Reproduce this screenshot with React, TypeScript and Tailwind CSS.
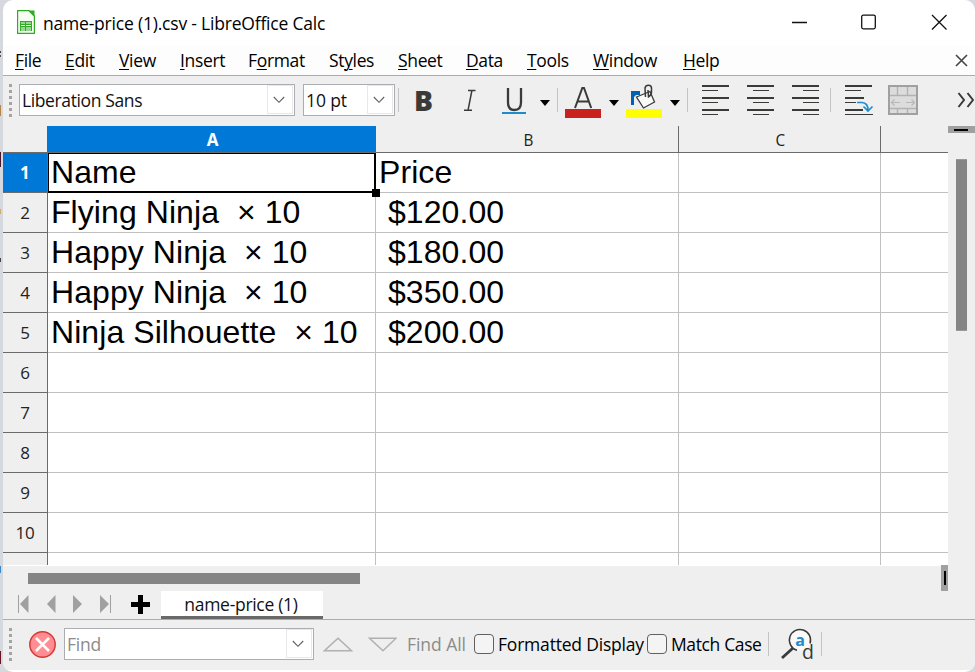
import React from "react";

const menus = [
  { pre: "", key: "F", post: "ile", w: "w-[50px]" },
  { pre: "", key: "E", post: "dit", w: "w-[54px]" },
  { pre: "", key: "V", post: "iew", w: "w-[61px]" },
  { pre: "", key: "I", post: "nsert", w: "w-[68px]" },
  { pre: "F", key: "o", post: "rmat", w: "w-[81px]" },
  { pre: "St", key: "y", post: "les", w: "w-[69px]" },
  { pre: "", key: "S", post: "heet", w: "w-[68px]" },
  { pre: "", key: "D", post: "ata", w: "w-[61px]" },
  { pre: "", key: "T", post: "ools", w: "w-[66px]" },
  { pre: "", key: "W", post: "indow", w: "w-[90px]" },
  { pre: "", key: "H", post: "elp", w: "w-[60px]" },
];

const rows = [
  ["Name", "Price"],
  ["Flying Ninja  × 10", " $120.00"],
  ["Happy Ninja  × 10", " $180.00"],
  ["Happy Ninja  × 10", " $350.00"],
  ["Ninja Silhouette  × 10", " $200.00"],
  ["", ""],
  ["", ""],
  ["", ""],
  ["", ""],
  ["", ""],
];

function Grip() {
  return (
    <div className="flex w-[3px] flex-col gap-[3px]">
      {[0, 1, 2, 3, 4, 5].map((i) => (
        <div key={i} className="size-[3px] bg-[#a3a3a3]" />
      ))}
    </div>
  );
}

function Combo({ text, cls, txt }: { text: string; cls: string; txt: string }) {
  return (
    <div className={`flex h-8 shrink-0 items-stretch border border-[#abadb3] bg-white ${cls}`}>
      <div className={`grow whitespace-pre pl-[2px] text-[17.5px] leading-[31px] ${txt}`}>{text}</div>
      <div className="mr-px mb-px flex w-[26px] items-center justify-center border border-[#e8e8e8] pr-0.5">
        <svg width="12" height="8" viewBox="0 0 12 8" fill="none" stroke="#5f5f5f" strokeWidth="1.1">
          <path d="M.8 1 6 6.3 11.2 1" />
        </svg>
      </div>
    </div>
  );
}

function Sep({ cls }: { cls: string }) {
  return <div className={`h-6 w-px shrink-0 bg-[#c3c3c3] ${cls}`} />;
}

function Arrow({ cls }: { cls: string }) {
  return (
    <svg className={`mt-1.5 shrink-0 ${cls}`} width="10" height="6" viewBox="0 0 10 6">
      <path d="M0 0H10L5 6Z" fill="#000" />
    </svg>
  );
}

function Align({ x, cls }: { x: number; cls: string }) {
  return (
    <svg className={`shrink-0 ${cls}`} width="27" height="30" viewBox="0 0 27 30" fill="#3a3a38">
      {[0, 12, 24].map((y) => (
        <g key={y}>
          <rect x="0" y={y} width="27" height="2" />
          <rect x={x} y={y + 5} width="16" height="1" />
        </g>
      ))}
    </svg>
  );
}

function FontTools() {
  return (
    <div className="flex h-[50px] items-center bg-[#efefef] pb-0.5 pl-[6px]">
      <Grip />
      <Combo text="Liberation Sans" cls="ml-[7px] w-[276px]" txt="text-[#111] tracking-[-0.38px]" />
      <Combo text="10 pt" cls="ml-2 w-[92px]" txt="text-[#111] tracking-[-0.1px]" />
      <Sep cls="ml-[3px]" />
      <svg className="ml-[16px] shrink-0" width="18" height="44" viewBox="0 0 18 44">
        <text x="-1" y="33" fontFamily="Open Sans" fontWeight="800" fontSize="29" textLength="19" lengthAdjust="spacingAndGlyphs" fill="#3a3a38">B</text>
      </svg>
      <svg className="ml-[31px] shrink-0" width="12" height="32" viewBox="0 0 12 32">
        <path d="M4 6.5H11.5M0 26.3H8M7.9 6.5 4 26.3" fill="none" stroke="#3a3a38" strokeWidth="1.5" />
      </svg>
      <svg className="ml-[26px] shrink-0" width="24" height="32" viewBox="0 0 24 32">
        <path d="M6 4V18.5Q6 26 12.5 26T19 18.5V4" fill="none" stroke="#3a3a38" strokeWidth="2.3" />
        <rect y="28" width="24" height="2" fill="#1e8bcd" />
      </svg>
      <Arrow cls="ml-[14px]" />
      <Sep cls="ml-[7px]" />
      <svg className="ml-[7px] shrink-0" width="36" height="36" viewBox="0 0 36 36">
        <path d="M10 26 17.3 6H19L26.2 26M12.4 19.5H23.8" fill="none" stroke="#3a3a38" strokeWidth="2" />
        <rect y="27" width="36" height="9" fill="#c9211e" />
      </svg>
      <Arrow cls="ml-[8px]" />
      <svg className="ml-[7px] shrink-0" width="36" height="36" viewBox="0 0 36 36">
        <path d="M5 23V9H14V13H10L8 15V23Z" fill="#0063b1" />
        <path d="M10.5 15 24 9.5 28.5 20 17.5 26Z" fill="#fafafa" stroke="#3a3a38" strokeWidth="1.3" />
        <path d="M19.5 15 19 6Q19.5 3.2 22.5 3.2T25.5 6V10Q25.5 13 22.5 15L22 8" fill="none" stroke="#3a3a38" strokeWidth="1.5" />
        <rect y="27" width="36" height="9" fill="#ff0" />
      </svg>
      <Arrow cls="ml-[8px]" />
      <Sep cls="ml-[7px]" />
      <Align x={0} cls="ml-[14px]" />
      <Align x={6} cls="ml-[18px]" />
      <Align x={11} cls="ml-[18px]" />
      <Sep cls="ml-[11px]" />
      <svg className="ml-[14px] shrink-0" width="29" height="30" viewBox="0 0 29 30">
        <g fill="#3a3a38">
          <rect width="27" height="2" /><rect y="5" width="16" height="1" />
          <rect y="12" width="19" height="2" /><rect y="17" width="11" height="1" />
          <rect y="24" width="18" height="2" /><rect y="29" width="28" height="1" />
        </g>
        <path d="M12 17.5H17Q23 18 23 25M18.5 21.5 23 26 27.5 21.5" fill="none" stroke="#1e8bcd" strokeWidth="1.7" />
      </svg>
      <svg className="ml-[14px] shrink-0" width="30" height="30" viewBox="0 0 30 30" fill="none">
        <rect x="1" y="1" width="28" height="28" fill="#dcdcdc" stroke="#a0a0a0" strokeWidth="2" />
        <path d="M2 10.5H28M2 23.5H28M9.5 2V10M19.5 2V10M9.5 24V28M19.5 24V28" stroke="#b2b2b2" strokeWidth="1.4" />
        <path d="M3.5 17.5H12M6.5 14.5 3.5 17.5 6.5 20.5M18 17.5H26.5M23.5 14.5 26.5 17.5 23.5 20.5" stroke="#b8b8b8" strokeWidth="1.2" />
      </svg>
      <svg className="ml-[38px] shrink-0" width="18" height="16" viewBox="0 0 18 16" fill="none" stroke="#3a3a38" strokeWidth="2">
        <path d="M2.5 1 8 8 2.5 15M11.5 1 17 8 11.5 15" />
      </svg>
    </div>
  );
}

function Sheet() {
  return (
    <div className="flex h-[440px] bg-[#efefef]">
      <div className="w-[945px] overflow-hidden bg-white">
        <div className="flex h-[27px] border-b border-[#6b6b6b] bg-[#efefef] text-[17px] leading-[27px] text-[#222]">
          <div className="w-[44px]" />
          <div className="w-[329px] bg-[#0078d7] pl-0.5 text-center font-bold text-white">A</div>
          <div className="w-[303px] border-r border-[#6b6b6b] pl-0.5 text-center"><span className="inline-block scale-x-90">B</span></div>
          <div className="w-[202px] border-r border-[#6b6b6b] pl-0.5 text-center"><span className="inline-block scale-x-90">C</span></div>
        </div>
        {rows.map((r, i) => (
          <div key={i} className="flex h-10 font-['Liberation_Sans',sans-serif] text-[32px] leading-[38px] tracking-[0.07px] text-black">
            <div
              className={
                i === 0
                  ? "w-[45px] border-r border-b border-[#6b6b6b] bg-[#0078d7] text-center font-['Open_Sans',sans-serif] text-[17px] font-bold leading-[40px] text-white"
                  : "w-[45px] border-r border-b border-[#6b6b6b] bg-[#efefef] text-center font-['Open_Sans',sans-serif] text-[17px] leading-[39px] tracking-[-0.3px] text-[#222]"
              }
            >
              {i + 1}
            </div>
            {i === 0 ? (
              <div className="relative w-[328px] border-t border-r-2 border-b-2 border-l border-black pl-[2px] leading-[37px]">
                {r[0]}
                <div className="absolute -right-[6px] -bottom-[6px] size-2 bg-black" />
              </div>
            ) : (
              <div className="w-[328px] whitespace-pre border-r border-b border-[#c0c0c0] pl-[3px]">{r[0]}</div>
            )}
            <div className="w-[303px] whitespace-pre border-r border-b border-[#c0c0c0] pl-[3px]">{r[1]}</div>
            <div className="w-[202px] border-r border-b border-[#c0c0c0]" />
            <div className="grow border-b border-[#c0c0c0]" />
          </div>
        ))}
        <div className="flex h-[12px]">
          <div className="w-[45px] border-r border-[#6b6b6b] bg-[#efefef]" />
          <div className="w-[328px] border-r border-[#c0c0c0]" />
          <div className="w-[303px] border-r border-[#c0c0c0]" />
          <div className="w-[202px] border-r border-[#c0c0c0]" />
        </div>
      </div>
      <div className="w-[27px]">
        <div className="flex h-[7px] items-center bg-[#a0a0a0] pl-[6px]">
          <div className="h-[2px] w-[14px] bg-black" />
        </div>
        <div className="mt-[26px] ml-2 h-[172px] w-[11px] border-y border-[#999] bg-[#858585]" />
      </div>
    </div>
  );
}

function SheetTabs() {
  return (
    <div className="h-[54px] border-b border-[#ababab] bg-[#efefef]">
      <div className="flex h-[25px]">
        <div className="mt-[7px] ml-[25px] h-[11px] w-[332px] bg-[#858585]" />
        <div className="-mt-px ml-[581px] flex h-[26px] w-[7px] shrink-0 items-center justify-center bg-[#a0a0a0] pl-px">
          <div className="h-[14px] w-[2px] bg-black" />
        </div>
      </div>
      <div className="flex h-[28px]">
        <svg className="mt-[4px] ml-[15px]" width="94" height="18" viewBox="0 0 94 18">
          <path d="M10.5 0V18L2 9ZM37.5 0V18L29 9ZM55 0V18L64 9ZM82 0V18L91 9Z" fill="#a0a0a0" />
          <path d="M.5 0V18M92.5 0V18" stroke="#a0a0a0" />
        </svg>
        <svg className="mt-[4px] ml-[19px]" width="19" height="19" viewBox="0 0 19 19">
          <path d="M7 0H12V7H19V12H12V19H7V12H0V7H7Z" fill="#000" />
        </svg>
        <div className="ml-[11px] h-[28px] w-[162px] border-b-[3px] border-[#696969] bg-white pr-0.5 text-center text-[17.5px] leading-[27px] tracking-[-0.3px] text-[#111]">
          name-price (1)
        </div>
      </div>
    </div>
  );
}

function FindBar() {
  return (
    <div className="flex h-[50px] items-center bg-[#efefef] pb-0.5 pl-[6px] text-[17.5px] whitespace-nowrap text-black">
      <Grip />
      <svg className="ml-[17px]" width="27" height="27" viewBox="0 0 27 27">
        <circle cx="13.5" cy="13.5" r="12.7" fill="#ff8d92" stroke="#d53a36" strokeWidth="1.5" />
        <path d="M7 7 20 20M20 7 7 20" stroke="#fff" strokeWidth="2.6" />
      </svg>
      <Combo text="Find" cls="ml-2 w-[250px]" txt="text-[#8b8b8b] tracking-[-0.2px]" />
      <svg className="ml-[9px] shrink-0" width="74" height="15" viewBox="0 0 74 15" fill="none" stroke="#b0b0b0" strokeWidth="1.5">
        <path d="M1.5 13.7H28.5L15 1.2ZM46.5 1.2H73L60 13.7Z" />
      </svg>
      <span className="ml-[10px] w-[67px] shrink-0 tracking-[-0.05px] text-[#8b8b8b]">Find All</span>
      <div className="size-5 shrink-0 rounded border border-[#606060] bg-[#f4f4f4]" />
      <span className="ml-1 w-[149px] shrink-0 tracking-[-0.2px]">Formatted Display</span>
      <div className="size-5 shrink-0 rounded border border-[#606060] bg-[#f4f4f4]" />
      <span className="ml-1 w-[97px] shrink-0 tracking-[-0.37px]">Match Case</span>
      <Sep cls="" />
      <svg className="ml-[12px] shrink-0" width="34" height="42" viewBox="0 0 34 42">
        <circle cx="19" cy="17" r="10.5" fill="#fafafa" />
        <path d="M16 27.2A10.6 10.6 0 1 1 29 20.5" fill="none" stroke="#3a3a38" strokeWidth="1.5" />
        <path d="M12 25 1 35" stroke="#3a3a38" strokeWidth="2.8" />
        <text x="14.3" y="22.5" fontFamily="Open Sans" fontWeight="700" fontSize="16" fill="#1e8bcd">a</text>
        <text x="21" y="35.5" fontFamily="Open Sans" fontSize="19.5" fill="#3a3a38">d</text>
      </svg>
      <Sep cls="ml-[6px]" />
    </div>
  );
}

export default function App() {
  return (
    <div className="flex h-[672px] w-[975px] overflow-hidden bg-[#d5d8dc] font-['Open_Sans',sans-serif]">
      <div className="w-[3px] shrink-0">
        <div className="mt-[51px] h-[2px] w-px bg-[#444]" />
        <div className="mt-[2px] h-[2px] w-px bg-[#555]" />
        <div className="mt-[48px] h-[11px] w-px bg-[#b98544]" />
        <div className="mt-[36px] h-[15px] w-px bg-[#4a1a2a]" />
        <div className="mt-[42px] h-[5px] w-px bg-[#d6a860]" />
        <div className="mt-[44px] h-[4px] w-px bg-[#444]" />
        <div className="mt-[304px] h-[7px] w-px bg-[#3c87c8]" />
        <div className="mt-[78px] h-[13px] w-px bg-[#6b1420]" />
      </div>
      <div className="h-[672px] w-[972px] overflow-hidden rounded-[10px] bg-white">
        <div className="flex h-[46px] items-center">
          <svg className="mb-[3px] ml-[14px]" width="18" height="24" viewBox="0 0 18 24" fill="none">
            <path d="M.6.6H12L17.4 6V23.4H.6Z" fill="#f4fff1" stroke="#2fab24" strokeWidth="1.2" />
            <path d="M11 .5H17.5V7Z" fill="#2fab24" />
            <rect x="3" y="11" width="12" height="10" fill="#2fab24" />
            <path d="M4 13H8M9 13H14M4 15.5H8M9 15.5H14M4 18H8M9 18H14M4 20H8M9 20H14" stroke="#fff" strokeWidth="1" />
          </svg>
          <span className="ml-2 w-[284px] text-[17.5px] leading-[46px] tracking-[-0.2px] whitespace-nowrap text-black">name-price (1).csv - LibreOffice Calc</span>
          <svg className="mb-px ml-[465px] shrink-0" width="155" height="17" viewBox="0 0 155 17" fill="none" stroke="#111" strokeWidth="1.3">
            <path d="M0 8.5H15M140 1 154.5 15.5M154.5 1 140 15.5" />
            <rect x="69.7" y="1.2" width="13.6" height="13.6" rx="1.5" />
          </svg>
        </div>
        <div className="flex h-[30px] items-center border-b border-[#ababab] bg-[#fdfdfd] pl-3 text-[17.5px] text-black">
          {menus.map((m) => (
            <div key={m.key + m.post} className={`shrink-0 pb-px tracking-[-0.35px] whitespace-nowrap ${m.w}`}>
              {m.pre}
              <span className="underline decoration-1 underline-offset-2">{m.key}</span>
              {m.post}
            </div>
          ))}
          <svg className="mb-px ml-[212px] shrink-0" width="13" height="13" viewBox="0 0 13 13">
            <path d="M1 1 12 12M12 1 1 12" stroke="#444" strokeWidth="1.6" />
          </svg>
        </div>
        <FontTools />
        <Sheet />
        <SheetTabs />
        <FindBar />
      </div>
    </div>
  );
}
